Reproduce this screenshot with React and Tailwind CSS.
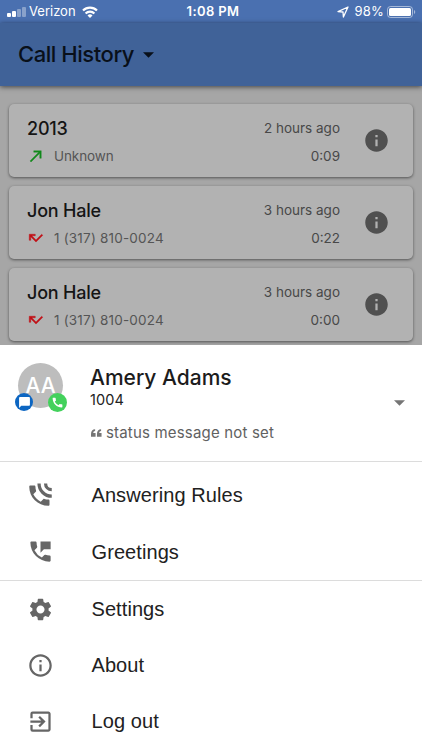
import React from "react";
import {
  MdInfo, MdInfoOutline, MdSettings,
  MdExitToApp, MdPermPhoneMsg, MdChatBubble, MdCall,
} from "react-icons/md";

const inter = "font-[Inter,'Liberation_Sans',sans-serif]";
const helv = "font-['Liberation_Sans',Arial,sans-serif]";

function Caret({ className }) {
  return (
    <svg viewBox="0 0 12 6" className={className} fill="currentColor">
      <path d="M0 0h12L6 6z" />
    </svg>
  );
}

function CallArrow({ missed }) {
  return missed ? (
    <svg viewBox="0 0 24 24" className="size-[18px] text-[#c11016]" fill="currentColor" stroke="currentColor" strokeWidth="0.600">
      <path d="M19.590 7L12 14.590 6.410 9H11V7H3v8h2v-4.590l7 7 9-9z" />
    </svg>
  ) : (
    <svg viewBox="0 0 24 24" className="size-[18px] text-[#128a1c]" fill="currentColor" stroke="currentColor" strokeWidth="0.500">
      <path d="M9 5v2h6.590L4 18.590 5.410 20 17 8.410V15h2V5z" />
    </svg>
  );
}

function PhoneWaves({ className }) {
  return (
    <svg viewBox="0 0 24 24" className={className} fill="currentColor">
      <path d="M19 16.500c-1.250 0-2.450-.2-3.570-.570-.350-.110-.740-.030-1.020.240l-2.200 2.200c-2.830-1.440-5.150-3.750-6.590-6.580l2.200-2.210c.280-.270.360-.660.250-1.010C7.700 7.450 7.500 6.250 7.500 5c0-.550-.450-1-1-1H3c-.550 0-1 .450-1 1 0 9.390 7.610 17 17 17 .550 0 1-.450 1-1v-3.500c0-.550-.450-1-1-1z" />
      <g fill="none" stroke="currentColor" strokeWidth="2.900">
        <path d="M10.700 2.200C10.700 8.500 15.700 13.500 22 13.500" />
        <path d="M16.500 2.200C16.500 5.300 18.900 7.700 22 7.700" />
      </g>
    </svg>
  );
}

function StatusBar() {
  return (
    <div className="flex h-[23px] shrink-0 items-center bg-[#4a70b0] pt-px text-[13px] text-white">
      <div className="flex w-[180px] items-center pl-[7px]">
        <div className="flex h-[10px] items-end gap-[1px]">
          <i className="h-[4px] w-[4px] rounded-[1px] bg-white" />
          <i className="h-[6px] w-[4px] rounded-[1px] bg-white" />
          <i className="h-[8px] w-[4px] rounded-[1px] bg-white/35" />
          <i className="h-[10px] w-[4px] rounded-[1px] bg-white/35" />
        </div>
        <span className="ml-[3px] w-[47px] whitespace-nowrap">Verizon</span>
        <svg viewBox="0 0 16 12" className="ml-[6px] h-[12px] w-[16px]" fill="none" stroke="white" strokeWidth="2.200">
          <path d="M1 4.500a10 10 0 0 1 14 0M3.600 7.400a6.200 6.200 0 0 1 8.800 0" />
          <path d="M5.500 9.400a3.600 3.600 0 0 1 5 0L8 11.900z" fill="white" stroke="none" />
        </svg>
      </div>
      <span className="w-[66px] text-center font-semibold tracking-[0.4px] whitespace-nowrap">1:08 PM</span>
      <div className="flex flex-1 items-center justify-end pr-[6px]">
        <svg viewBox="0 0 12 12" className="mr-[6px] h-[12px] w-[12px]" fill="none" stroke="white" strokeWidth="1.300" strokeLinejoin="round">
          <path d="M11 1L1 5.600l5 .4.400 5z" />
        </svg>
        <span className="mr-[3px] tracking-[0.2px] whitespace-nowrap">98%</span>
        <svg viewBox="0 0 29 12" className="h-[12px] w-[29px]">
          <rect x=".5" y=".5" width="25" height="11" rx="3" fill="none" stroke="white" strokeOpacity=".5" />
          <rect x="2" y="2" width="22" height="8" rx="1.500" fill="white" />
          <path d="M27 4v4c1.700-.6 1.700-3.400 0-4z" fill="white" fillOpacity=".5" />
        </svg>
      </div>
    </div>
  );
}

function CallCard({ name, missed, sub, ago, len }) {
  return (
    <div className="flex h-[73px] shrink-0 items-center rounded-[5px] bg-[#b2b2b2] pr-[23px] pl-[18px] shadow-[0_1px_3px_rgba(0,0,0,0.5)]">
      <div className="flex flex-1 flex-col pt-[3px]">
        <div className="flex h-[26px] items-center justify-between">
          <span className="text-[18px] font-[450] tracking-[-0.2px] text-[#151515]">{name}</span>
          <span className="text-[13.500px] text-[#484848]">{ago}</span>
        </div>
        <div className="mt-[2px] flex h-[26px] items-center text-[13.500px] text-[#555]">
          <CallArrow missed={missed} />
          <span className={missed ? "ml-[9px] flex-1 tracking-[0.2px]" : "ml-[9px] flex-1 tracking-[-0.1px]"}>{sub}</span>
          <span className="text-[#484848]">{len}</span>
        </div>
      </div>
      <MdInfo className="ml-[23px] size-[27px] text-[#505050]" />
    </div>
  );
}

function MenuItem({ icon, label, h }) {
  return (
    <div className={`flex items-center pl-[27px] ${h}`}>
      <span className="text-[#666]">{icon}</span>
      <span className={`ml-[37.500px] text-[20px] tracking-[0.08px] whitespace-nowrap text-[#212121] ${helv}`}>{label}</span>
    </div>
  );
}

export default function App() {
  return (
    <div className={`flex h-[750px] w-[422px] flex-col overflow-hidden bg-[#a6a6a6] ${inter}`}>
      <StatusBar />
      <header className="z-10 flex h-[63px] shrink-0 items-center bg-[#406298] pl-[18px] text-[#09101a] shadow-[0_1px_5px_rgba(0,0,0,0.6)]">
        <span className="text-[22px] font-[450] tracking-[-0.450px]">Call History</span>
        <Caret className="ml-[9px] h-[6px] w-[11px]" />
      </header>
      <main className="flex h-[259px] shrink-0 flex-col gap-[9px] overflow-hidden px-[9px] pt-[18px]">
        <CallCard name="2013" sub="Unknown" ago="2 hours ago" len="0:09" />
        <CallCard name="Jon Hale" missed sub="1 (317) 810-0024" ago="3 hours ago" len="0:22" />
        <CallCard name="Jon Hale" missed sub="1 (317) 810-0024" ago="3 hours ago" len="0:00" />
      </main>
      <section className="flex flex-1 flex-col bg-white">
        <div className="flex h-[117px] shrink-0 border-b border-[#dcdcdc] pl-[15px]">
          <div className="relative mt-[18px] h-[50px] w-[52px]">
            <div className="ml-[3px] flex size-[45px] items-center justify-center rounded-full bg-[#bdbdbd] pt-px text-[21px] font-[450] text-white">AA</div>
            <div className="absolute top-[30px] left-0 flex size-[18px] items-center justify-center rounded-full bg-[#0d66c2] text-white">
              <MdChatBubble className="size-[13px]" />
            </div>
            <div className="absolute top-[30px] left-[33px] flex size-[19px] items-center justify-center rounded-full bg-[#43d15c] text-white">
              <MdCall className="size-[13px]" />
            </div>
          </div>
          <div className="ml-[23px] flex flex-1 flex-col pt-[19px]">
            <span className="h-[27px] text-[21px] leading-[27px] font-[450] text-[#1c1c1c]">Amery Adams</span>
            <span className="h-[18px] text-[14.500px] leading-[18px] tracking-[0.1px] text-[#222]">1004</span>
            <div className="mt-[13px] flex h-[22px] items-center text-[15px] tracking-[0.18px] text-[#616161]">
              <svg viewBox="0 0 12 8" className="mr-[4px] ml-[1px] h-[8px] w-[11px]" fill="#757575">
                <path d="M4.500 0C1.800 0 0 2 0 5v3h5V4H2.500C2.500 2.600 3.300 1.800 4.500 1.700zM11 0C8.300 0 6.500 2 6.500 5v3h5V4H9c0-1.400.8-2.200 2-2.300z" />
              </svg>
              <span>status message not set</span>
            </div>
          </div>
          <Caret className="mt-[55px] mr-[17px] h-[6px] w-[11px] text-[#757575]" />
        </div>
        <div className="flex h-[119px] shrink-0 flex-col border-b border-[#dcdcdc] pt-[4px]">
          <MenuItem h="h-[57px]" label="Answering Rules" icon={<PhoneWaves className="size-[27px]" />} />
          <MenuItem h="h-[57px]" label="Greetings" icon={<MdPermPhoneMsg className="size-[27px]" />} />
        </div>
        <MenuItem h="h-[56px]" label="Settings" icon={<MdSettings className="size-[27px]" />} />
        <MenuItem h="h-[56px]" label="About" icon={<MdInfoOutline className="size-[27px]" />} />
        <MenuItem h="h-[56px]" label="Log out" icon={<MdExitToApp className="size-[27px]" />} />
      </section>
    </div>
  );
}
